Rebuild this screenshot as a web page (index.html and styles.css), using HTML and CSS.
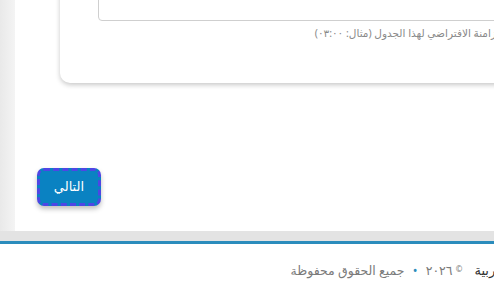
FILE: index.html
```html
<!DOCTYPE html>
<html lang="ar">
<head>
    <meta charset="utf-8" />
    <title>إعداد الجدول</title>
    <link rel="stylesheet" href="styles.css">
</head>
<body>

<div class="site">

    <!-- منطقة المحتوى -->
    <div class="shell">
        <div class="shell-edge"></div>
        <div class="shell-main">

            <!-- بطاقة الإعدادات -->
            <div class="card">
                <div class="field">
                    <input class="field-input" type="text" value="" />
                </div>
                <p class="field-help">وقت المزامنة الافتراضي لهذا الجدول (مثال: ٠٣:٠٠)</p>
            </div>

            <div class="actions">
                <a class="btn-next" href="#">التالي</a>
            </div>
        </div>
    </div>

    <!-- التذييل -->
    <div class="footer">
        <div class="footer-inner">
            <a class="footer-lang" href="#">العربية</a>
            <span class="footer-copy"><span class="copy-sign">©</span> ٢٠٢٦ <span class="dot">•</span> جميع الحقوق محفوظة</span>
        </div>
    </div>

</div>

</body>
</html>
```

FILE: styles.css
```css
html, body{margin: 0;padding: 0;}
body{
    background: #fff;
    overflow: hidden;
    font-family: "Noto Sans", "DejaVu Sans", sans-serif;
}

.site{width: 560px;}

/*المحتوى*/
.shell{
    display: flex;
    background: #e3e3e3;
    padding-bottom: 10px;
}
.shell-edge{
    width: 15px;
    background: linear-gradient(to right, #e9e9e9, #f4f4f4);
}
.shell-main{
    flex: 1;
    background: #fff;
    padding: 0 0 25px 22px;
}

/*البطاقة*/
.card{
    margin: -40px 0 0 23px;
    padding: 19px 0 42px 38px;
    background: #fff;
    border-radius: 0 0 0 10px;
    box-shadow: 0 2px 5px rgba(0,0,0,.22);
}
.field-input{
    display: block;
    width: 100%;
    height: 42px;
    box-sizing: border-box;
    margin: 0;
    border: 1px solid #cfcfcf;
    border-radius: 4px;
    background: #fff;
    outline: none;
}
.field-help{
    margin: 4px 28px 0 0;
    direction: rtl;
    text-align: right;
    font-size: 10.5px;
    line-height: 16px;
    color: #8a8a8a;
    white-space: nowrap;
}

/*زر التالي*/
.actions{margin-top: 85px;}
.btn-next{
    display: inline-block;
    width: 58px;height: 32px;
    line-height: 31px;
    text-align: center;
    font-size: 13px;
    color: #fff;
    text-decoration: none;
    background: #0a82c2;
    border: 3px dashed #4f46e5;
    border-radius: 7px;
    box-shadow: 0 3px 5px rgba(0,0,0,.25);
}

/*التذييل*/
.footer{
    border-top: 3px solid #2b8cbc;
    background: #fff;
    height: 60px;
}
.footer-inner{
    direction: rtl;
    display: flex;
    align-items: center;
    gap: 12px;
    padding: 17px 50px 0 0;
}
.footer-lang{
    font-size: 13px;
    color: #333;
    text-decoration: none;
}
.footer-copy{
    font-size: 12.5px;
    color: #7a7a7a;
}
.copy-sign{font-size: 8px;vertical-align: 3px;}
.dot{color: #2b8cbc;margin: 0 5px;}
```
